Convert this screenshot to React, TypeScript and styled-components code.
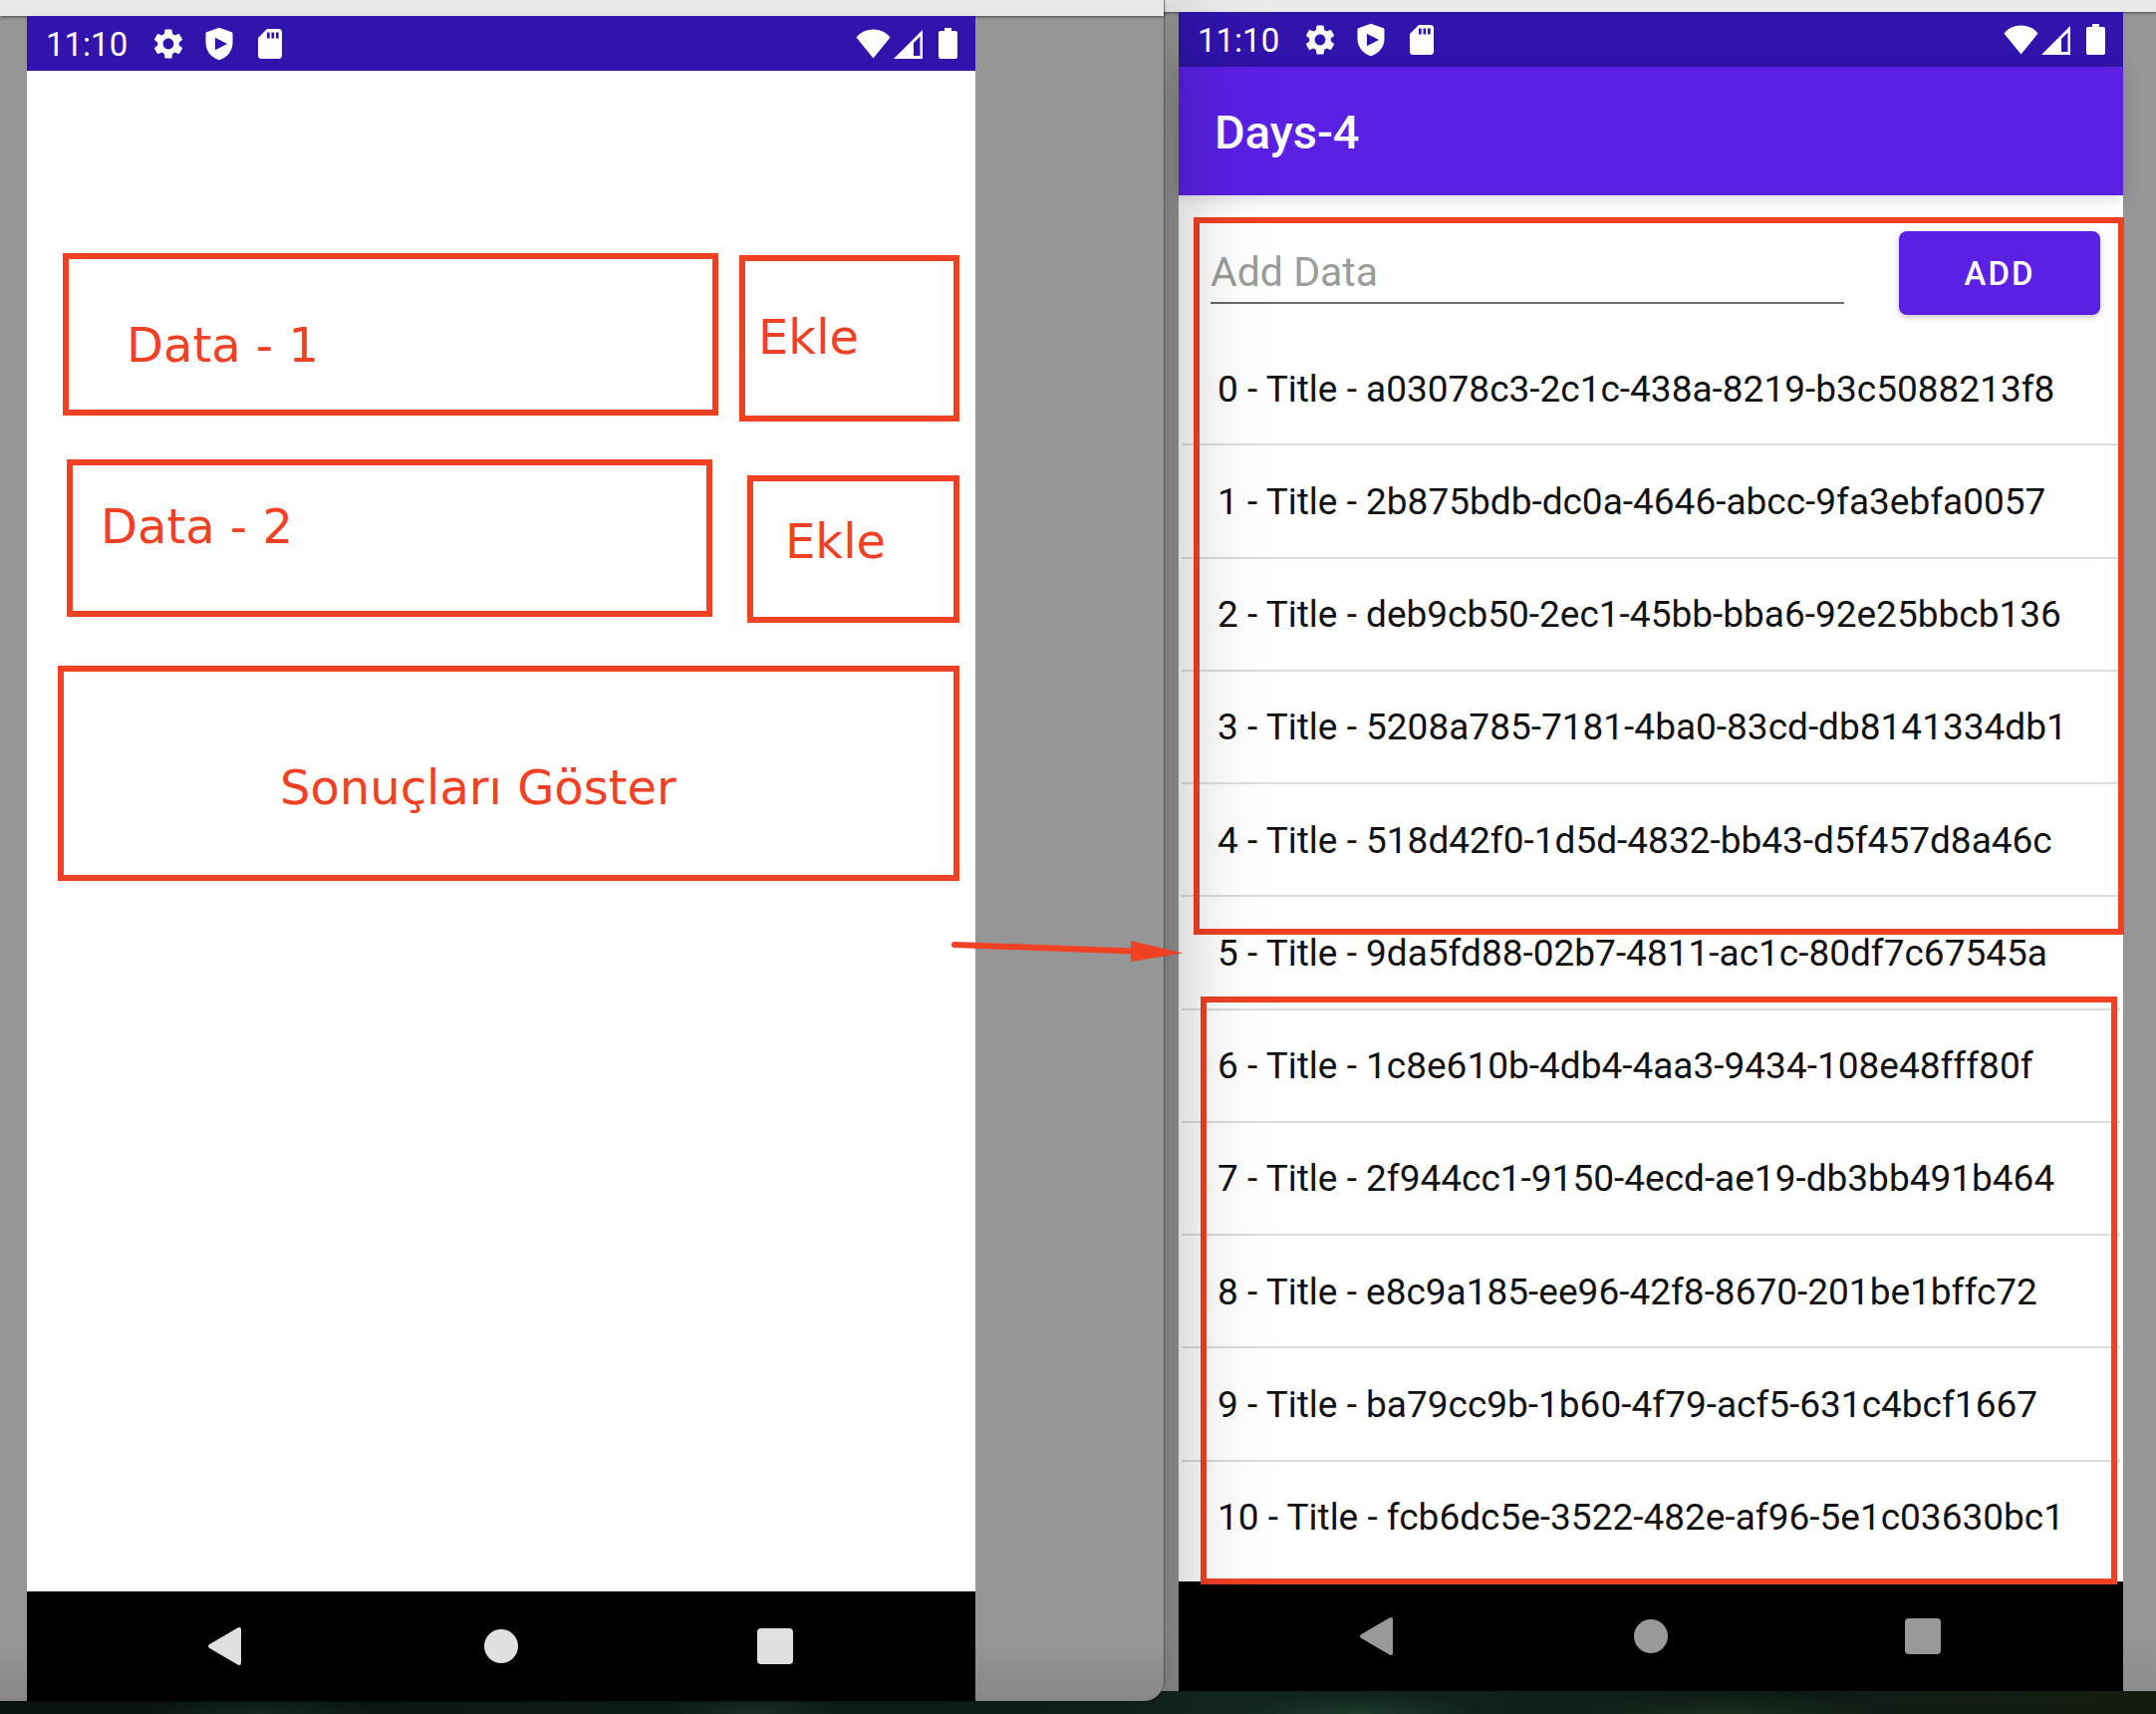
import React from "react";
import styled, { createGlobalStyle } from "styled-components";

const RED = "#f04124";
const ROBOTO = 'Roboto, "Noto Sans", sans-serif';

const GlobalStyle = createGlobalStyle`
  *, *::before, *::after { box-sizing: border-box; }
  body { margin: 0; font-family: ${ROBOTO}; }
`;

const Desktop = styled.main`
  display: grid;
  grid-template-columns: 1168fr 996fr;
  align-items: start;
  min-height: 100vh;
  overflow: hidden;
  background:
    radial-gradient(ellipse 90px 24px at 35% 100%, #22352a, transparent),
    radial-gradient(ellipse 120px 20px at 63% 100%, #1d3a2c, transparent),
    radial-gradient(ellipse 160px 20px at 80% 100%, #1c2c1b, transparent),
    radial-gradient(ellipse 120px 20px at 12% 100%, #1b3026, transparent),
    linear-gradient(90deg, #0b1512, #10211b 30%, #12271f 55%, #0d1c18 80%, #151c0f);
`;

const LeftWindow = styled.section`
  position: relative;
  z-index: 1;
  display: flex;
  flex-direction: column;
  min-height: calc(100vh - 13px);
  border-bottom-right-radius: 20px;
  background: linear-gradient(0deg, #868686, #969696 60px);
  box-shadow: 0 0 1px 1px rgba(0, 0, 0, 0.3), 0 16px 100px rgba(0, 0, 0, 0.34);
`;

const RightWindow = styled.section`
  display: flex;
  flex-direction: column;
  min-height: calc(100vh - 23px);
  margin-left: -20px;
  background: linear-gradient(0deg, #8c8c8c, #969696 60px);
`;

const TitleStrip = styled.div<{ $height: number; $color: string }>`
  height: ${(p) => p.$height}px;
  background: ${(p) => p.$color};
  box-shadow: 0 1px 3px rgba(0, 0, 0, 0.5);
`;

const Phone = styled.div<{ $left: number; $right: number }>`
  display: flex;
  flex: 1;
  flex-direction: column;
  margin: 0 ${(p) => p.$right}px 0 ${(p) => p.$left}px;
  background: #fff;
`;

const StatusBar = styled.header`
  display: flex;
  align-items: center;
  justify-content: space-between;
  height: 55px;
  padding: 0 18px 0 19px;
  background: #3014ac;
  color: #fff;
`;

const StatusGroup = styled.div<{ $gap: number }>`
  display: flex;
  align-items: center;
  gap: ${(p) => p.$gap}px;

  svg { display: block; }
`;

const Clock = styled.time`
  margin-right: 8px;
  padding-top: 2px;
  font-size: 33px;
  line-height: 40px;
`;

const NavBar = styled.nav<{ $color: string }>`
  display: grid;
  grid-template-columns: repeat(3, 1fr);
  height: 110px;
  padding: 0 64px;
  background: #000;
  color: ${(p) => p.$color};
`;

const NavButton = styled.button`
  display: flex;
  align-items: center;
  justify-content: center;
  padding: 0;
  border: 0;
  background: none;
  color: inherit;
`;

const SketchBody = styled.div`
  position: relative;
  display: flex;
  flex: 1;
  flex-direction: column;
  padding: 183px 16px 0 31px;
`;

const SketchRow = styled.div<{ $top: number; $height: number; $indent: number }>`
  display: flex;
  justify-content: space-between;
  height: ${(p) => p.$height}px;
  margin-top: ${(p) => p.$top}px;
  padding-left: ${(p) => p.$indent}px;
`;

const SketchInput = styled.input<{ $width: number; $height: number; $padding: string }>`
  width: ${(p) => p.$width}px;
  height: ${(p) => p.$height}px;
  padding: ${(p) => p.$padding};
  border: 6px solid ${RED};
  background: #fff;
  color: ${RED};
  font: 48px/56px Verdana, "DejaVu Sans", sans-serif;
`;

const SketchButton = styled.button<{ $width?: number; $height: number; $padding: string }>`
  display: flex;
  align-items: flex-start;
  align-self: flex-end;
  width: ${(p) => (p.$width ? `${p.$width}px` : "100%")};
  height: ${(p) => p.$height}px;
  padding: ${(p) => p.$padding};
  border: 6px solid ${RED};
  background: #fff;
  color: ${RED};
  font: 48px/56px Verdana, "DejaVu Sans", sans-serif;
`;

const Arrow = styled.svg`
  position: absolute;
  top: 872px;
  left: calc(100% - 24px);
`;

const AppBar = styled.div`
  position: relative;
  display: flex;
  align-items: center;
  height: 129px;
  padding: 2px 36px 0;
  background: #5a20e4;
  box-shadow: 0 2px 16px rgba(0, 0, 0, 0.16);
`;

const AppTitle = styled.h1`
  margin: 0;
  color: #fff;
  font-size: 47px;
  font-weight: 500;
  line-height: 56px;
`;

const AppBody = styled.div`
  position: relative;
  display: flex;
  flex: 1;
  flex-direction: column;
`;

const AddForm = styled.form`
  display: flex;
  align-items: flex-start;
  gap: 55px;
  padding: 36px 23px 0 32px;
`;

const AddInput = styled.input`
  flex: 1;
  min-width: 0;
  height: 73px;
  padding: 10px 0 0;
  border: 0;
  border-bottom: 2px solid #6b6b6b;
  border-radius: 0;
  background: none;
  color: #111;
  font: 41px/48px ${ROBOTO};

  &::placeholder { color: #9c9c9c; opacity: 1; }
`;

const AddButton = styled.button`
  width: 202px;
  height: 84px;
  padding: 2px 0 0;
  border: 0;
  border-radius: 8px;
  background: #5a20e4;
  box-shadow: 0 2px 6px rgba(0, 0, 0, 0.25);
  color: #fff;
  font: 500 33px/40px ${ROBOTO};
  letter-spacing: 2px;
`;

const TitleList = styled.ul`
  display: flex;
  flex: 1;
  flex-direction: column;
  margin: 18px 3px 0;
  padding: 0 0 7px;
  list-style: none;
`;

const TitleItem = styled.li`
  display: flex;
  flex: 1;
  align-items: center;
  padding: 2px 0 0 36px;
  border-bottom: 2px solid #dcdcdc;
  color: #111;
  font-size: 37px;
  line-height: 44px;
  white-space: nowrap;

  &:last-child { border-bottom-color: transparent; }
`;

const Highlight = styled.div<{ $top: number; $left: number; $right: number; $height: number }>`
  position: absolute;
  top: ${(p) => p.$top}px;
  right: ${(p) => p.$right}px;
  left: ${(p) => p.$left}px;
  height: ${(p) => p.$height}px;
  border: 6px solid ${RED};
  pointer-events: none;
`;

const GearIcon = () => (
  <svg width="36" height="36" viewBox="0 0 24 24" fill="currentColor" aria-hidden="true">
    <path d="M19.14 12.94c.04-.3.06-.61.06-.94 0-.32-.02-.64-.07-.94l2.03-1.58c.18-.14.23-.41.12-.61l-1.92-3.32c-.12-.22-.37-.29-.59-.22l-2.39.96c-.5-.38-1.03-.7-1.62-.94l-.36-2.54c-.04-.24-.24-.41-.48-.41h-3.84c-.24 0-.43.17-.47.41l-.36 2.54c-.59.24-1.13.57-1.62.94l-2.39-.96c-.22-.08-.47 0-.59.22L2.74 8.87c-.12.21-.08.47.12.61l2.03 1.58c-.05.3-.09.63-.09.94s.02.64.07.94l-2.03 1.58c-.18.14-.23.41-.12.61l1.92 3.32c.12.22.37.29.59.22l2.39-.96c.5.38 1.03.7 1.62.94l.36 2.54c.05.24.24.41.48.41h3.84c.24 0 .44-.17.47-.41l.36-2.54c.59-.24 1.13-.56 1.62-.94l2.39.96c.22.08.47 0 .59-.22l1.92-3.32c.12-.22.07-.47-.12-.61l-2.01-1.58zM12 15.6c-1.98 0-3.6-1.62-3.6-3.6s1.62-3.6 3.6-3.6 3.6 1.62 3.6 3.6-1.62 3.6-3.6 3.6z" />
  </svg>
);

const ShieldIcon = () => (
  <svg width="36" height="36" viewBox="0 0 24 24" fill="currentColor" fillRule="evenodd" aria-hidden="true">
    <path d="M12 1.2L3.6 4.2Q3 4.4 3 5v6.2C3 16.6 6.4 21 11.4 22.7q.6.2 1.2 0C17.6 21 21 16.6 21 11.200V5q0-.6-.6-.8zM9.300 7.800L17.400 12l-8.100 4.200z" />
  </svg>
);

const SdCardIcon = () => (
  <svg width="36" height="36" viewBox="0 0 24 24" fill="currentColor" fillRule="evenodd" aria-hidden="true">
    <path d="M18 2h-8L4 8v12c0 1.100.9 2 2 2h12c1.100 0 2-.9 2-2V4c0-1.100-.9-2-2-2zM10 4.300h1.800v4H10zM13 4.300h1.800v4H13zM16 4.300h1.800v4H16z" />
  </svg>
);

const WifiIcon = () => (
  <svg width="35" height="30" viewBox="0 0 35 30" fill="currentColor" aria-hidden="true">
    <path d="M17.500 29.500L.5 8.500C4.500 3.200 11 .5 17.500 .5S30.500 3.200 34.500 8.500z" />
  </svg>
);

const SignalIcon = () => (
  <svg width="29" height="30" viewBox="0 0 29 30" fill="currentColor" fillRule="evenodd" aria-hidden="true">
    <path d="M0 30L29 1v29zM20 14v13h6.500V7.500z" />
  </svg>
);

const BatteryIcon = () => (
  <svg width="19" height="31" viewBox="0 0 19 31" fill="currentColor" aria-hidden="true">
    <path d="M6 0h7v3h4q2 0 2 2v24q0 2-2 2H2q-2 0-2-2V5q0-2 2-2h4z" />
  </svg>
);

const SystemStatus = () => (
  <StatusBar>
    <StatusGroup $gap={15}>
      <Clock>11:10</Clock>
      <GearIcon />
      <ShieldIcon />
      <SdCardIcon />
    </StatusGroup>
    <StatusGroup $gap={16}>
      <StatusGroup $gap={3}>
        <WifiIcon />
        <SignalIcon />
      </StatusGroup>
      <BatteryIcon />
    </StatusGroup>
  </StatusBar>
);

const SystemNav = ({ color }: { color: string }) => (
  <NavBar $color={color} aria-label="System">
    <NavButton type="button" aria-label="Back">
      <svg width="38" height="38" viewBox="0 0 38 38" fill="currentColor">
        <path d="M1 17.200L30 .3q3-1 3 2v33.400q0 3-3 2L1 20.800q-2-1.800 0-3.600z" />
      </svg>
    </NavButton>
    <NavButton type="button" aria-label="Home">
      <svg width="34" height="34" viewBox="0 0 34 34" fill="currentColor">
        <circle cx="17" cy="17" r="17" />
      </svg>
    </NavButton>
    <NavButton type="button" aria-label="Overview">
      <svg width="36" height="36" viewBox="0 0 36 36" fill="currentColor">
        <rect width="36" height="36" rx="4" />
      </svg>
    </NavButton>
  </NavBar>
);

const ids = [
  "a03078c3-2c1c-438a-8219-b3c5088213f8",
  "2b875bdb-dc0a-4646-abcc-9fa3ebfa0057",
  "deb9cb50-2ec1-45bb-bba6-92e25bbcb136",
  "5208a785-7181-4ba0-83cd-db8141334db1",
  "518d42f0-1d5d-4832-bb43-d5f457d8a46c",
  "9da5fd88-02b7-4811-ac1c-80df7c67545a",
  "1c8e610b-4db4-4aa3-9434-108e48fff80f",
  "2f944cc1-9150-4ecd-ae19-db3bb491b464",
  "e8c9a185-ee96-42f8-8670-201be1bffc72",
  "ba79cc9b-1b60-4f79-acf5-631c4bcf1667",
  "fcb6dc5e-3522-482e-af96-5e1c03630bc1",
];

export default function App() {
  return (
    <>
      <GlobalStyle />
      <Desktop>
        <LeftWindow>
          <TitleStrip $height={16} $color="#e8e8e8" />
          <Phone $left={27} $right={189}>
            <SystemStatus />
            <SketchBody>
              <SketchRow $top={0} $height={169} $indent={5}>
                <SketchInput
                  aria-label="Data 1"
                  defaultValue="Data - 1"
                  $width={658}
                  $height={163}
                  $padding="20px 0 0 58px"
                />
                <SketchButton type="button" $width={221} $height={167} $padding="48px 0 0 13px">
                  Ekle
                </SketchButton>
              </SketchRow>
              <SketchRow $top={38} $height={164} $indent={9}>
                <SketchInput
                  aria-label="Data 2"
                  defaultValue="Data - 2"
                  $width={648}
                  $height={158}
                  $padding="0 0 24px 28px"
                />
                <SketchButton type="button" $width={213} $height={148} $padding="32px 0 0 32px">
                  Ekle
                </SketchButton>
              </SketchRow>
              <SketchRow $top={43} $height={216} $indent={0}>
                <SketchButton type="button" $height={216} $padding="88px 0 0 217px">
                  Sonuçları Göster
                </SketchButton>
              </SketchRow>
              <Arrow width="234" height="24" viewBox="0 0 234 24" aria-hidden="true">
                <path d="M3 5L182 11.500" stroke={RED} strokeWidth="6" strokeLinecap="round" />
                <path d="M180 1L232 13.500L180 22z" fill={RED} />
              </Arrow>
            </SketchBody>
            <SystemNav color="#e0e0e0" />
          </Phone>
        </LeftWindow>

        <RightWindow>
          <TitleStrip $height={12} $color="#ebeae8" />
          <Phone $left={35} $right={33}>
            <SystemStatus />
            <AppBar>
              <AppTitle>Days-4</AppTitle>
            </AppBar>
            <AppBody>
              <AddForm onSubmit={(e) => e.preventDefault()}>
                <AddInput aria-label="Add Data" placeholder="Add Data" />
                <AddButton type="submit">ADD</AddButton>
              </AddForm>
              <TitleList>
                {ids.map((id, i) => (
                  <TitleItem key={id}>{`${i} - Title - ${id}`}</TitleItem>
                ))}
              </TitleList>
              <Highlight $top={22} $left={15} $right={-1} $height={720} />
              <Highlight $top={804} $left={22} $right={6} $height={590} />
            </AppBody>
            <SystemNav color="#999" />
          </Phone>
        </RightWindow>
      </Desktop>
    </>
  );
}
